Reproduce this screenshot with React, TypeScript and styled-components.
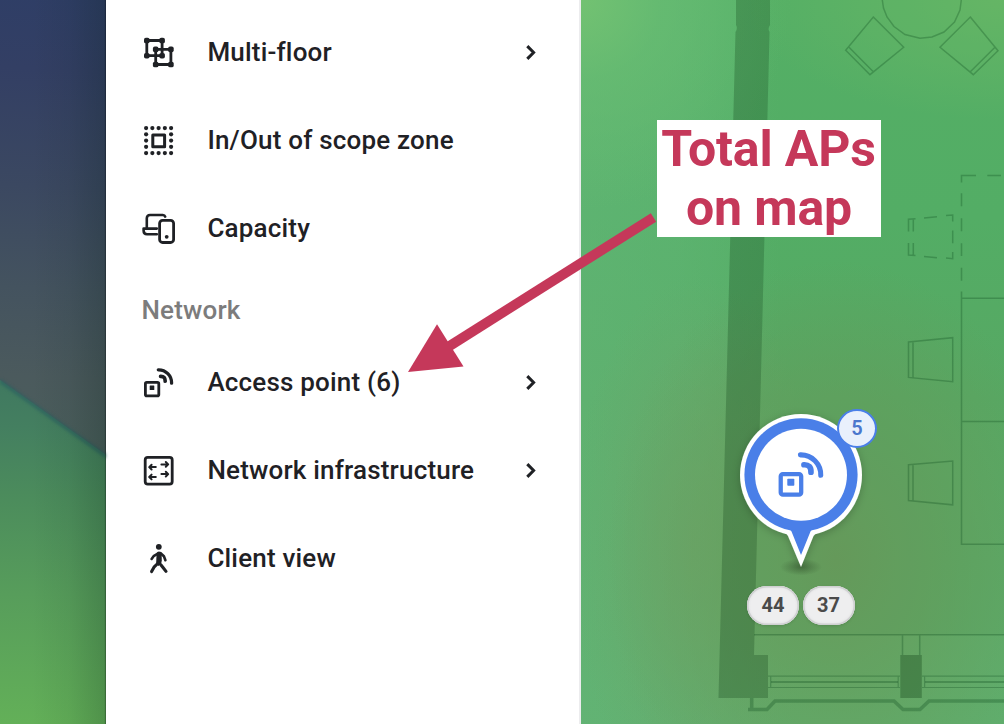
import React from "react";
import styled, { createGlobalStyle } from "styled-components";

const INK = "#1f2125";
const BLUE = "#4a7fe8";
const CRIMSON = "#c5385a";

const GlobalStyle = createGlobalStyle`
  * { box-sizing: border-box; }
  body { margin: 0; font-family: Roboto, "Liberation Sans", sans-serif; overflow: hidden; }
`;

const Screen = styled.div`
  position: relative;
  display: flex;
  width: 1004px;
  height: 724px;
  overflow: hidden;
`;

const Wallpaper = styled.div`
  position: relative;
  flex: 0 0 106px;
  background: linear-gradient(183deg, #2f3e66 0%, #333f64 10%, #3b4861 26%, #44535f 40%, #4b5a5d 52%, #4b5f5c 62%);
  &::before {
    content: "";
    position: absolute;
    inset: 0;
    background: linear-gradient(180deg, #3f7860 52%, #447f60 59%, #4b8b5c 68%, #579d5b 82%, #63b058 100%);
    clip-path: polygon(0 380px, 106px 455px, 106px 724px, 0 724px);
  }
  &::after {
    content: "";
    position: absolute;
    inset: 0;
    background:
      linear-gradient(90deg, transparent 98.5%, rgba(0, 0, 0, 0.25) 99%),
      linear-gradient(90deg, transparent 30%, rgba(0, 25, 15, 0.06) 65%, rgba(0, 25, 15, 0.2) 100%);
  }
`;

const HillEdge = styled.svg`
  position: absolute;
  inset: 0;
  filter: blur(1.8px);
`;

const Sidebar = styled.nav`
  flex: 0 0 475px;
  display: flex;
  flex-direction: column;
  padding-top: 8px;
  background: #fff;
  border-right: 2px solid #ececee;
`;

const Item = styled.div`
  display: flex;
  align-items: center;
  height: 88px;
  padding: 0 36px 0 35px;
  color: ${INK};
`;

const ItemLabel = styled.span`
  flex: 1;
  margin-left: 30.4px;
  font-size: 26px;
  font-weight: 500;
  line-height: 36px;
  letter-spacing: 0.19px;
  white-space: nowrap;
`;

const SectionTitle = styled.h2`
  margin: 0;
  height: 66px;
  padding: 20px 0 0 35.4px;
  font-size: 26px;
  font-weight: 500;
  line-height: 36px;
  letter-spacing: 0.19px;
  color: #7c7c7c;
`;

const Glyph = styled.svg`
  flex: none;
  fill: none;
  stroke: currentColor;
  stroke-width: 2.8;
  stroke-linecap: round;
  stroke-linejoin: round;
`;

const MapArea = styled.main`
  position: relative;
  flex: 1;
  overflow: hidden;
  background:
    radial-gradient(circle at 0 0, rgba(118, 196, 114, 0.85) 0, rgba(106, 190, 114, 0.6) 80px, transparent 210px),
    radial-gradient(ellipse 260px 120px at 100% 0, rgba(106, 185, 104, 0.9), transparent),
    radial-gradient(ellipse 230px 300px at 255px 560px, rgba(104, 155, 92, 1) 0, rgba(102, 158, 93, 0.7) 40%, transparent 100%),
    radial-gradient(ellipse 125px 270px at 115px 545px, rgba(108, 165, 105, 0.85), transparent),
    linear-gradient(90deg, rgba(100, 182, 120, 0.55) 0, rgba(100, 182, 120, 0.4) 100px, transparent 200px),
    linear-gradient(180deg, #56b268 0, #55b068 30%, #59ab66 55%, #5faf6e 100%);
`;

const Plan = styled.svg`
  position: absolute;
  inset: 0;
`;

const Callout = styled.div`
  position: absolute;
  left: 657px;
  top: 120px;
  width: 224px;
  height: 117px;
  background: #fff;
  color: ${CRIMSON};
  font-size: 50px;
  font-weight: 700;
  line-height: 58.5px;
  letter-spacing: -0.15px;
  text-align: center;
  text-indent: -0.8px;
  white-space: nowrap;
`;

const CalloutArrow = styled.svg`
  position: absolute;
  left: 400px;
  top: 205px;
`;

const Pin = styled.div`
  position: absolute;
  left: 149px;
  top: 404px;
  width: 142px;
  height: 176px;
`;

const PinShape = styled.svg`
  position: absolute;
  inset: 0;
`;

const PinGlyph = styled.div`
  position: absolute;
  left: 43.7px;
  top: 42.3px;
  color: ${BLUE};
`;

const CountBadge = styled.span`
  position: absolute;
  left: 107px;
  top: 5px;
  width: 40px;
  height: 39px;
  border: 2px solid ${BLUE};
  border-radius: 50%;
  background: #e9f0fc;
  color: #4b77cd;
  font-size: 20px;
  font-weight: 600;
  line-height: 35px;
  text-align: center;
`;

const Channels = styled.div`
  position: absolute;
  left: 166px;
  top: 586px;
  display: flex;
  gap: 3.6px;
`;

const Channel = styled.span`
  width: 52px;
  height: 39px;
  border-radius: 20px;
  background: #eeeeef;
  box-shadow: inset 0 0 0 1.5px #cfd0d1, inset 0 0 3px 1px #d6d6d8, 0 1px 3px rgba(0, 0, 0, 0.12);
  color: #4a4a4a;
  font-size: 20px;
  font-weight: 700;
  line-height: 39px;
  text-align: center;
`;

type IconProps = { size?: number };

const MultiFloorIcon = () => (
  <Glyph width="36" height="36" viewBox="0 0 36 36">
    <rect x="5.8" y="6.5" width="15.3" height="15.2" />
    <rect x="14.7" y="15.4" width="15.2" height="15.1" />
    <g fill="currentColor" stroke="none">
      {[[5.8, 6.5], [21.1, 6.5], [5.8, 21.7], [21.1, 21.7], [14.7, 15.4], [29.9, 15.4], [14.7, 30.5], [29.9, 30.5]].map(([x, y]) => (
        <rect key={`${x}-${y}`} x={x - 2.8} y={y - 2.8} width="5.6" height="5.6" rx="1.9" />
      ))}
    </g>
  </Glyph>
);

const dots = [0, 1, 2, 3, 4];
const ScopeIcon = () => (
  <Glyph width="36" height="36" viewBox="0 0 36 36">
    <rect x="11.8" y="12.9" width="11.8" height="11.8" strokeWidth="3" />
    <g fill="currentColor" stroke="none">
      {dots.flatMap((c) =>
        dots
          .filter((r) => c === 0 || c === 4 || r === 0 || r === 4)
          .map((r) => <circle key={`${c}-${r}`} cx={5.1 + c * 6.25} cy={6.1 + r * 6.25} r="2.1" />)
      )}
    </g>
  </Glyph>
);

const DevicesIcon = () => (
  <Glyph width="36" height="36" viewBox="0 0 36 36">
    <path d="M24.2 6.6Q23.7 5 21.8 5H9Q5.8 5 5.8 8.2V18.6M15.8 18.6H2.6V20.6Q2.6 24.3 6 24.3H15.8" strokeWidth="2.6" />
    <rect x="18.6" y="10.3" width="14" height="22.2" rx="3" />
    <circle cx="25.7" cy="26.8" r="1.9" fill="currentColor" stroke="none" />
  </Glyph>
);

const AccessPointIcon = ({ size = 36 }: IconProps) => (
  <Glyph width={size} height={size} viewBox="0 0 36 36" style={{ display: "block" }}>
    <rect x="4.4" y="18.4" width="13.4" height="13.4" rx="1.4" />
    <rect x="8.7" y="21.4" width="4.6" height="4.6" fill="currentColor" stroke="none" rx="0.5" />
    <path d="M17.3 5.8A13 13 0 0 1 30.6 19.2" strokeWidth="3.3" />
    <path d="M19.6 12.3Q24.4 12.1 24.2 17.2" strokeWidth="3.7" />
  </Glyph>
);

const InfrastructureIcon = () => (
  <Glyph width="36" height="36" viewBox="0 0 36 36">
    <rect x="4.2" y="5.3" width="27" height="26.8" rx="2.6" />
    <path
      strokeWidth="2"
      d="M14.8 15.1H8.6M10.6 12.7L8.2 15.1L10.6 17.5M14.8 25H8.6M10.6 22.6L8.2 25L10.6 27.4M20.4 12.4H26.6M24.8 10L27.2 12.4L24.8 14.8M20.4 22.1H26.6M24.8 19.7L27.2 22.1L24.8 24.5"
    />
  </Glyph>
);

const WalkIcon = () => (
  <Glyph width="36" height="36" viewBox="0 0 36 36">
    <g fill="currentColor" stroke="none">
      <circle cx="17.8" cy="6.8" r="2.9" />
      <path d="M15.6 13Q16 11.4 18 11.4Q20 11.4 20.6 13L20.8 20.5L20 24.4L17.4 26L15.2 22.4Z" />
    </g>
    <path d="M16 14.2L12.6 16.2L10.6 19M19.6 13.2L22.9 16.3L24.4 20.2" strokeWidth="2.6" />
    <path d="M17.2 23L13 27.2L10.6 31.6M20 25L22.2 27.8L25 31.4" strokeWidth="3.1" />
  </Glyph>
);

const Chevron = () => (
  <Glyph width="24" height="24" viewBox="0 0 24 24">
    <path d="M8.3 6.1L14.6 12.5L8.3 18.9" strokeWidth="3" strokeLinecap="butt" style={{ strokeLinecap: "butt", strokeLinejoin: "miter" }} />
  </Glyph>
);

type Entry = { label: string; icon: React.ReactNode; expandable?: boolean };

const general: Entry[] = [
  { label: "Multi-floor", icon: <MultiFloorIcon />, expandable: true },
  { label: "In/Out of scope zone", icon: <ScopeIcon /> },
  { label: "Capacity", icon: <DevicesIcon /> },
];

const network: Entry[] = [
  { label: "Access point (6)", icon: <AccessPointIcon />, expandable: true },
  { label: "Network infrastructure", icon: <InfrastructureIcon />, expandable: true },
  { label: "Client view", icon: <WalkIcon /> },
];

const renderEntry = ({ label, icon, expandable }: Entry) => (
  <Item key={label}>
    {icon}
    <ItemLabel>{label}</ItemLabel>
    {expandable && <Chevron />}
  </Item>
);

const FloorPlan = () => (
  <Plan width="423" height="724" viewBox="581 0 423 724">
    <path d="M770 0H1004V635H754.5L764.3 237Z" fill="#2c5a10" fillOpacity="0.03" />
    <g fill="#0c3a14" fillOpacity="0.26">
      <path d="M736 0H770V25Q767.5 28.5 769.5 32L754 655H768V698H718.5L735.5 32Q738 28.5 736 25Z" />
      <rect x="900.3" y="655" width="21.5" height="43" fillOpacity="0.32" />
    </g>
    <g fill="none" stroke="#06451a" strokeOpacity="0.28" strokeWidth="1.5">
      <path
        d="M748 709.5H767L775 701H894L903 709.5H920L929 701H1004M751.7 698V708"
        strokeWidth="3.6"
      />
      <path d="M754 634.8H1004M902.5 635V655M919.7 635V655" />
      <path d="M768 676.2H900M768 687.5H900M770.7 676V687M898.2 676V687M922 676.2H1004M922 687.5H1004M924.6 676V687" strokeWidth="1.2" />
      <path d="M771 682H898M925 682H1004" strokeWidth="1.8" />
      <path d="M882.3 0L883.5 8L887 17L894 26.5L905 34.5L920 38.3L932 37L944 32L954.5 22L960 10L961.3 0" />
      <path d="M873.3 17L903.7 47.3L870 74.7L845.7 50.3ZM849 47.3L873.3 71.7" />
      <path d="M970.3 17L998 50.7L973.3 74.7L940 47.3ZM995 47.3L970.3 71.7" />
      <path d="M961.5 291.5V544.3H1004M961.5 298.3H1004M961.5 421.5H1004" />
      <path d="M908.5 342L952.7 337.7V381.7L908.5 377.4ZM913 342V377.4" />
      <path d="M908.5 464.8L952.7 461V504.8L908.5 500.5ZM913 464.8V500.5" />
      <path d="M961.5 182.5V175.5H976M987.3 175.5H1001M961.5 193.3V206.3M961.5 218.3V231.3M961.5 243.3V256M961.5 267.7V280.7" />
      <path d="M908.5 231.5V219.3L915.5 218.7M924 217.9L937 216.7M946 215.6L952.7 215V221.5M952.7 230.5V243.3M952.7 252V258.7L946 258.1M937 257.7L924 256.5M915.5 255.6L908.5 255V243M913.3 219V231.5M913.3 243V255.3" />
    </g>
  </Plan>
);

const AccessPointPin = () => (
  <Pin>
    <PinShape width="142" height="176" viewBox="730 404 142 176">
      <defs>
        <filter id="halo" x="-20%" y="-20%" width="140%" height="140%">
          <feDropShadow dx="0" dy="2" stdDeviation="4" floodColor="#000" floodOpacity="0.22" />
        </filter>
        <radialGradient id="ground">
          <stop offset="0" stopColor="#1d3318" stopOpacity="0.4" />
          <stop offset="1" stopColor="#1d3318" stopOpacity="0" />
        </radialGradient>
      </defs>
      <ellipse cx="801" cy="567" rx="21" ry="8.5" fill="url(#ground)" />
      <g filter="url(#halo)">
        <circle cx="801" cy="475" r="61" fill="#fff" />
        <path d="M784.5 533Q787.3 534 788 536L801 567L813.5 536Q814.5 534 817.5 533Z" fill="#fff" />
      </g>
      <circle cx="801" cy="474.8" r="56.6" fill={BLUE} />
      <path d="M786 528Q790.7 529.5 791.5 531.5L801 555L810.5 531.5Q811.3 529.5 816 528Z" fill={BLUE} />
      <circle cx="801" cy="474.8" r="46" fill="#fff" />
    </PinShape>
    <PinGlyph>
      <AccessPointIcon size={55} />
    </PinGlyph>
    <CountBadge>5</CountBadge>
  </Pin>
);

export default function App() {
  return (
    <>
      <GlobalStyle />
      <Screen>
        <Wallpaper>
          <HillEdge width="106" height="724">
            <path d="M-4 378L110 459" stroke="#2b5f60" strokeWidth="4" strokeOpacity="0.7" />
          </HillEdge>
        </Wallpaper>
        <Sidebar>
          {general.map(renderEntry)}
          <SectionTitle>Network</SectionTitle>
          {network.map(renderEntry)}
        </Sidebar>
        <MapArea>
          <FloorPlan />
          <AccessPointPin />
          <Channels>
            <Channel>44</Channel>
            <Channel>37</Channel>
          </Channels>
        </MapArea>
        <CalloutArrow width="260" height="172" viewBox="400 205 260 172">
          <path d="M653.5 217.4L448 347" stroke={CRIMSON} strokeWidth="10" />
          <path d="M408 372L437 324.3L463.5 366.5Z" fill={CRIMSON} />
        </CalloutArrow>
        <Callout>
          Total APs
          <br />
          on map
        </Callout>
      </Screen>
    </>
  );
}
